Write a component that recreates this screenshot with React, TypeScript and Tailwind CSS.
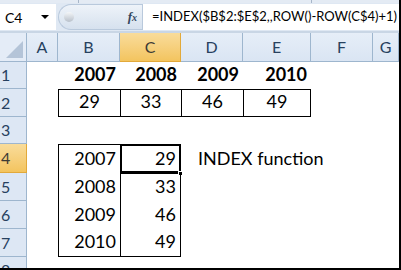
const font = { fontFamily: 'Lato, "Open Sans", sans-serif' };

const cols = ['A', 'B', 'C', 'D', 'E', 'F', 'G'];
const rowHeights = ['h-[27px]', 'h-[28px]', 'h-[27px]', 'h-[29px]', 'h-[28px]', 'h-[28px]', 'h-[28px]', 'h-[11px]'];

type Cell = { text?: string; cls?: string; bold?: boolean; align?: 'r' | 'c' };

function row(r: number): Cell[] {
  const cells: Cell[] = cols.map(() => ({}));
  if (r === 1) {
    ['2007', '2008', '2009', '2010'].forEach((t, i) => (cells[i + 1] = { text: t, bold: true, align: 'r' }));
  }
  if (r === 2) {
    ['29', '33', '46', '49'].forEach((t, i) => {
      cells[i + 1] = {
        text: t,
        align: 'c',
        cls: `border-t border-b border-l border-black ${i === 3 ? 'border-r' : ''}`,
      };
    });
  }
  if (r >= 4 && r <= 7) {
    const years = ['2007', '2008', '2009', '2010'];
    const vals = ['29', '33', '46', '49'];
    const last = r === 7;
    cells[1] = { text: years[r - 4], align: 'r', cls: `border-l border-black ${r === 4 ? 'border-t' : ''} ${last ? 'border-b' : ''}` };
    cells[2] = { text: vals[r - 4], align: 'r', cls: `border-l border-r border-black ${r === 4 ? 'border-t' : ''} ${last ? 'border-b' : ''}` };
  }
  return cells;
}

export default function App() {
  return (
    <div className="w-[401px] h-[270px] overflow-hidden bg-white border-r-2 border-b-2 border-black flex flex-col" style={font}>
      {/* ribbon edge */}
      <div className="h-[3px] bg-[#e4ebf4] flex">
        <div className="w-[79px] border-r border-[#a7b6c9]" />
        <div className="w-[233px] border-r border-[#a7b6c9]" />
      </div>

      {/* formula bar */}
      <div className="h-[28px] bg-[#dfe8f3] flex items-stretch py-[1px]">
        <div className="w-[56px] bg-white flex items-center pl-[5px] text-[14px] text-black">
          <span>C4</span>
          <span className="ml-auto mr-[7px] w-0 h-0 border-l-[4px] border-r-[4px] border-t-[4px] border-l-transparent border-r-transparent border-t-black" />
        </div>
        <div className="w-[2px]" />
        <div className="w-[84px] rounded-l-full bg-gradient-to-b from-[#eef3f9] to-[#d6e1ee] border border-[#b9c9dc] border-r-0 flex items-center">
          <span className="ml-[5px] w-[10px] h-[10px] rounded-full bg-gradient-to-b from-[#f4f6f8] to-[#b8c0ca]" />
          <span className="ml-auto mr-[5px] italic font-bold text-[13px] text-[#33475f]" style={{ fontFamily: '"Liberation Serif", serif' }}>
            f<span className="text-[10px]">x</span>
          </span>
        </div>
        <div className="flex-1 bg-white border-l border-[#b9c9dc] flex items-center pl-[9px] text-[13px] text-black whitespace-nowrap overflow-hidden">
          =INDEX($B$2:$E$2,,ROW()-ROW(C$4)+1)
        </div>
      </div>
      <div className="h-[2px] bg-[#c9d6e5]" />

      {/* sheet */}
      <div className="grid grid-cols-[27px_31px_62px_61px_62px_68px_62px_26px] text-[18px] text-black">
        {/* corner */}
        <div className="h-[29px] bg-[#e4ecf7] border-r border-b border-[#9eb6ce] flex items-end justify-end p-[3px]">
          <svg width="17" height="17" viewBox="0 0 17 17">
            <polygon points="17,0 17,17 0,17" fill="#b4c4d8" />
          </svg>
        </div>
        {cols.map((c) => (
          <div
            key={c}
            className={`h-[29px] border-r border-b flex items-center justify-center text-[16px] ${
              c === 'C'
                ? 'bg-gradient-to-b from-[#f9dc9a] to-[#f3c45e] border-[#e2a93a] text-[#3c3b35]'
                : 'bg-gradient-to-b from-[#e6eef8] to-[#dae5f3] border-[#9eb6ce] text-[#27415f]'
            }`}
          >
            {c}
          </div>
        ))}

        {rowHeights.map((h, ri) => {
          const r = ri + 1;
          const cells = row(r);
          return [
            <div
              key={`h${r}`}
              className={`${h} border-r flex pl-[1px] text-[16px] leading-[20px] overflow-hidden ${
                r === 8 ? 'items-start pt-[3px]' : 'items-center border-b'
              } ${
                r === 4 ? 'bg-gradient-to-b from-[#f9dc9a] to-[#f3c45e] border-[#e2a93a] text-[#3c3b35]' : 'bg-[#dde7f4] border-[#9eb6ce] text-[#27415f]'
              }`}
            >
              {r}
            </div>,
            ...cells.map((cell, ci) => (
              <div
                key={`${r}-${ci}`}
                className={`${h} relative flex items-end pb-[1px] px-[4px] ${cell.align === 'r' ? 'justify-end' : 'justify-center'} ${
                  cell.bold ? 'font-bold' : ''
                } ${cell.cls ?? ''}`}
              >
                {cell.text}
                {r === 4 && ci === 2 && (
                  <>
                    <div className="absolute -left-[1px] -top-[1px] -right-[1px] -bottom-[1px] border-2 border-b-[3px] border-black" />
                    <div className="absolute -right-[3px] -bottom-[3px] w-[5px] h-[5px] bg-black border border-white" />
                  </>
                )}
                {r === 4 && ci === 3 && (
                  <span className="absolute left-[17px] bottom-[1px] whitespace-nowrap">INDEX function</span>
                )}
              </div>
            )),
          ];
        })}
      </div>
    </div>
  );
}
